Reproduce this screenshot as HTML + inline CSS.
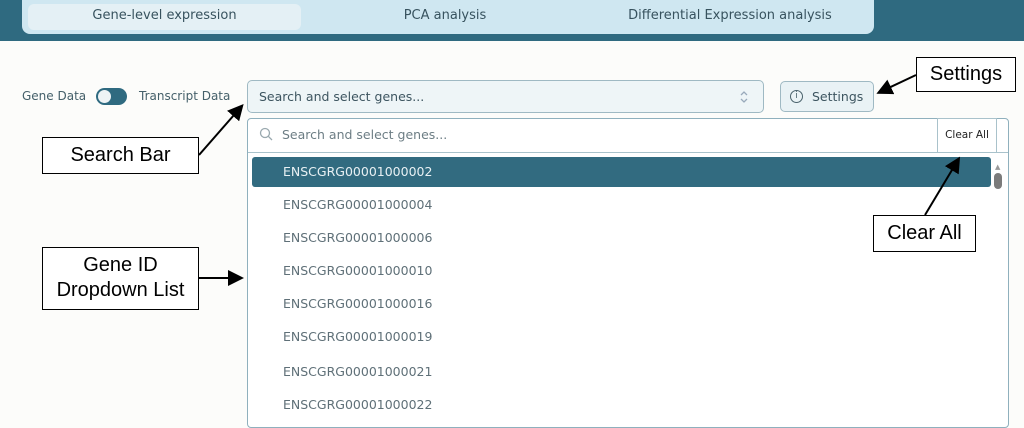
<!DOCTYPE html>
<html><head><style>
*{margin:0;padding:0;box-sizing:border-box}
body{width:1024px;height:416px;overflow:hidden;background:#fcfcfa;font-family:"DejaVu Sans","Liberation Sans",sans-serif;position:relative;color:#3d5560}
.abs{position:absolute}
.hdr{left:0;top:0;width:1024px;height:41px;background:#2f6a80}
.tabs{left:22px;top:0;width:852px;height:34px;background:#cfe7f1;border-radius:0 0 8px 8px}
.tab{position:absolute;top:0;height:34px;line-height:32px;font-size:13px;color:#37525e;text-align:center}
.act{left:28px;top:4px;width:273px;height:26px;background:#e4f0f5;border-radius:6px}
.lab{font-size:12px;color:#45606a}
.box{background:#fff;border:1.5px solid #000;font-family:"Liberation Sans",sans-serif;color:#000;font-size:20px;text-align:center}
.item{position:absolute;left:283px;font-size:12.5px;color:#5f7078}
</style></head><body>
<div class="abs hdr"></div>
<div class="abs tabs"></div>
<div class="abs act"></div>
<div class="tab" style="left:28px;width:273px;">Gene-level expression</div>
<div class="tab" style="left:330px;width:230px;">PCA analysis</div>
<div class="tab" style="left:580px;width:300px;">Differential Expression analysis</div>

<div class="abs lab" style="left:22px;top:89px">Gene Data</div>
<div class="abs" style="left:96px;top:88px;width:31px;height:17px;border-radius:9px;background:#2f6a80"></div>
<div class="abs" style="left:98px;top:90px;width:13px;height:13px;border-radius:50%;background:#eef3f5"></div>
<div class="abs lab" style="left:139px;top:89px">Transcript Data</div>

<div class="abs" style="left:247px;top:80px;width:517px;height:33px;border:1.5px solid #9fb9c3;border-radius:5px;background:#eef5f7"></div>
<div class="abs" style="left:259px;top:89px;font-size:12.5px;color:#3d5560">Search and select genes...</div>
<svg class="abs" style="left:739px;top:90px" width="10" height="14"><path d="M2,5 L5,2 L8,5 M2,9 L5,12 L8,9" fill="none" stroke="#9ab" stroke-width="1.3"/></svg>

<div class="abs" style="left:780px;top:81px;width:94px;height:31px;border:1.5px solid #9fb9c3;border-radius:5px;background:#e9f2f5"></div>
<div class="abs" style="left:790px;top:90px;width:13px;height:13px;border:1.3px solid #4a626c;border-radius:50%;font-size:9px;line-height:11px;text-align:center;color:#4a626c">i</div>
<div class="abs" style="left:812px;top:89px;font-size:12.5px;color:#3d5560">Settings</div>

<div class="abs" style="left:247px;top:118px;width:762px;height:310px;border:1.5px solid #8fb0bd;border-radius:4px;background:#fff"></div>
<div class="abs" style="left:248px;top:152px;width:760px;height:1px;background:#a9c2cb"></div>
<svg class="abs" style="left:259px;top:127px" width="14" height="14"><circle cx="6" cy="6" r="4.5" fill="none" stroke="#9aa9af" stroke-width="1.3"/><line x1="9.3" y1="9.3" x2="13" y2="13" stroke="#9aa9af" stroke-width="1.3"/></svg>
<div class="abs" style="left:282px;top:127px;font-size:12.5px;color:#6c7d84">Search and select genes...</div>
<div class="abs" style="left:937px;top:118px;width:60px;height:35px;border:1.5px solid #a9c2cb;background:#fff;font-size:10.5px;color:#222;text-align:center;line-height:33px">Clear All</div>

<div class="abs" style="left:252px;top:157px;width:739px;height:30px;background:#326b80;border-radius:3px"></div>
<div class="item" style="top:164px;color:#e8f0f3">ENSCGRG00001000002</div>
<div class="item" style="top:197px">ENSCGRG00001000004</div>
<div class="item" style="top:230px">ENSCGRG00001000006</div>
<div class="item" style="top:263px">ENSCGRG00001000010</div>
<div class="item" style="top:296px">ENSCGRG00001000016</div>
<div class="item" style="top:329px">ENSCGRG00001000019</div>
<div class="item" style="top:364px">ENSCGRG00001000021</div>
<div class="item" style="top:397px">ENSCGRG00001000022</div>
<div class="abs" style="left:995px;top:163px;font-size:7px;color:#999">&#9650;</div>
<div class="abs" style="left:994px;top:173px;width:8px;height:16px;border-radius:4px;background:#7b7b7b"></div>

<div class="abs box" style="left:42px;top:137px;width:157px;height:37px;line-height:35px">Search Bar</div>
<div class="abs box" style="left:42px;top:247px;width:157px;height:63px;line-height:25px;padding-top:5px">Gene ID<br>Dropdown List</div>
<div class="abs box" style="left:916px;top:57px;width:100px;height:35px;line-height:33px">Settings</div>
<div class="abs box" style="left:873px;top:215px;width:103px;height:37px;line-height:35px">Clear All</div>
<svg class="abs" style="left:0;top:0" width="1024" height="416">
<defs><marker id="a" markerWidth="8" markerHeight="8" refX="6" refY="4" orient="auto"><path d="M0,0 L8,4 L0,8z" fill="#000"/></marker></defs>
<g stroke="#000" stroke-width="2" fill="none">
<line x1="199" y1="155" x2="241" y2="107" marker-end="url(#a)"/>
<line x1="199" y1="278" x2="240" y2="278" marker-end="url(#a)"/>
<line x1="916" y1="75" x2="880" y2="92" marker-end="url(#a)"/>
<line x1="925" y1="215" x2="958" y2="160" marker-end="url(#a)"/>
</g></svg>
</body></html>
